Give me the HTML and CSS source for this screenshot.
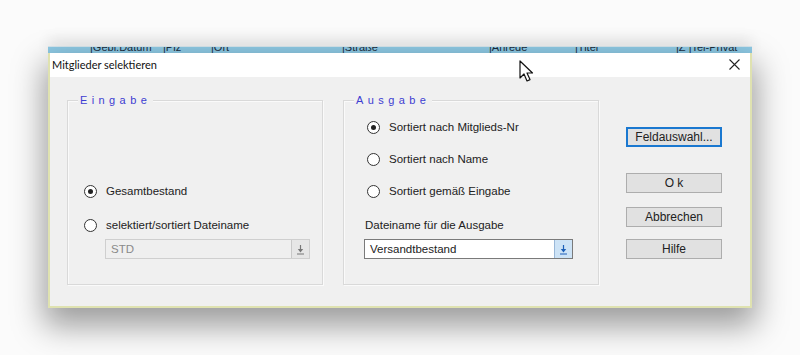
FILE: index.html
```html
<!DOCTYPE html>
<html>
<head>
  <meta charset="utf-8">
  <title>Mitglieder selektieren</title>
  <link rel="stylesheet" href="styles.css">
</head>
<body>
  <div class="scene">
    <div class="backstrip">
      <div class="backstrip-text">
        <span class="col c1">|Gebl.Datum</span>
        <span class="col c2">|Plz</span>
        <span class="col c3">|Ort</span>
        <span class="col c4">|Straße</span>
        <span class="col c5">|Anrede</span>
        <span class="col c6">|Titel</span>
        <span class="col c7">|Z |Tel-Privat</span>
      </div>
    </div>
    <div class="dialog">
      <div class="titlebar">
        <span class="title">Mitglieder selektieren</span>
        <svg class="close" width="11" height="11" viewBox="0 0 11 11">
          <path d="M0.5 0.5 L10.5 10.5 M10.5 0.5 L0.5 10.5" stroke="#222" stroke-width="1.1" fill="none"/>
        </svg>
      </div>
      <div class="body">
        <div class="group group-in">
          <span class="group-title">Eingabe</span>
          <div class="group-bottom">
            <div class="radio-row">
              <span class="radio checked"></span>
              <span>Gesamtbestand</span>
            </div>
            <div class="radio-row row-gap">
              <span class="radio"></span>
              <span>selektiert/sortiert Dateiname</span>
            </div>
            <div class="combo combo-disabled">
              <span class="combo-text">STD</span>
              <span class="combo-btn">
                <svg width="9" height="11" viewBox="0 0 9 11">
                  <path d="M4.5 1 V7" stroke="#777" stroke-width="1.2"/>
                  <path d="M1.8 5 H7.2 L4.5 8.4 Z" fill="#777"/>
                  <path d="M1 10 H8" stroke="#777" stroke-width="1"/>
                </svg>
              </span>
            </div>
          </div>
        </div>

        <div class="group group-out">
          <span class="group-title">Ausgabe</span>
          <div class="out-rows">
            <div class="radio-row">
              <span class="radio checked"></span>
              <span>Sortiert nach Mitglieds-Nr</span>
            </div>
            <div class="radio-row out-gap">
              <span class="radio"></span>
              <span>Sortiert nach Name</span>
            </div>
            <div class="radio-row out-gap">
              <span class="radio"></span>
              <span>Sortiert gemäß Eingabe</span>
            </div>
            <div class="field-label">Dateiname für die Ausgabe</div>
            <div class="combo">
              <span class="combo-text">Versandtbestand</span>
              <span class="combo-btn combo-btn-active">
                <svg width="9" height="11" viewBox="0 0 9 11">
                  <path d="M4.5 1 V7" stroke="#1d5fb8" stroke-width="1.2"/>
                  <path d="M1.8 5 H7.2 L4.5 8.4 Z" fill="#1d5fb8"/>
                  <path d="M1 10 H8" stroke="#1d5fb8" stroke-width="1"/>
                </svg>
              </span>
            </div>
          </div>
        </div>

        <div class="buttons">
          <button class="btn btn-focus">Feldauswahl...</button>
          <button class="btn btn-ok">O k</button>
          <button class="btn btn-cancel">Abbrechen</button>
          <button class="btn btn-help">Hilfe</button>
        </div>
      </div>
    </div>
    <svg class="cursor" width="16" height="24" viewBox="0 0 16 24">
      <path d="M1 1 V18 L5 14 L8 21 L11 19.6 L8 13 H13.5 Z" fill="#fff" stroke="#111" stroke-width="1.2" stroke-linejoin="round"/>
    </svg>
  </div>
</body>
</html>
```

FILE: styles.css
```css
html, body {
  margin: 0;
  padding: 0;
  background: #fbfbfb;
}

body {
  font-family: "Liberation Sans", Arial, sans-serif;
  font-size: 11.5px;
  color: #222;
}

.scene {
  position: relative;
  width: 800px;
  height: 355px;
  overflow: hidden;
  padding-top: 46px;
  box-sizing: border-box;
}

.backstrip {
  margin-left: 48px;
  width: 704px;
  height: 6px;
  overflow: hidden;
  background: #8fcbe6;
  border-top: 1px solid #d9e8ef;
  box-shadow: 0 -6px 14px rgba(0, 0, 0, 0.12);
}

.backstrip-text {
  position: relative;
  height: 6px;
}

.col {
  position: absolute;
  top: -6px;
  font-size: 11px;
  line-height: 12px;
  color: #1a2a3a;
  white-space: nowrap;
}

.c1 { left: 42px; }
.c2 { left: 115px; }
.c3 { left: 163px; }
.c4 { left: 294px; }
.c5 { left: 441px; }
.c6 { left: 527px; }
.c7 { left: 628px; }

.dialog {
  margin-left: 48px;
  width: 704px;
  box-sizing: border-box;
  border: 1px solid #dfe2b0;
  border-width: 0 2px 2px 2px;
  background: #f0f0f0;
  box-shadow: 0 14px 30px 4px rgba(0, 0, 0, 0.38);
}

.titlebar {
  height: 24px;
  background: #fff;
  display: flex;
  align-items: center;
  justify-content: space-between;
  padding: 0 10px 0 2px;
}

.title {
  font-family: Lato, "Noto Sans", sans-serif;
  font-size: 11px;
  color: #111;
  margin-top: -2px;
}

.close {
  margin-top: -1px;
}

.body {
  height: 229px;
  display: flex;
  align-items: flex-start;
  padding-left: 17px;
}

.group {
  width: 256px;
  height: 185px;
  box-sizing: border-box;
  margin-top: 23px;
  border: 1px solid #d9d9d9;
  box-shadow: inset 1px 1px 0 #fafafa, 1px 1px 0 #fafafa;
  display: flex;
  flex-direction: column;
  align-items: flex-start;
}

.group-out {
  margin-left: 20px;
}

.group-title {
  display: inline-block;
  margin: -8px 0 0 10px;
  padding: 0 2px;
  background: #f0f0f0;
  color: #3d3dd2;
  font-size: 11px;
  line-height: 14px;
  letter-spacing: 4.4px;
}

.group-bottom {
  margin-top: auto;
  padding: 0 0 25px 16px;
}

.radio-row {
  display: flex;
  align-items: center;
  height: 16px;
  line-height: 16px;
  white-space: nowrap;
}

.row-gap {
  margin-top: 18px;
}

.radio {
  width: 11px;
  height: 11px;
  border: 1px solid #333;
  border-radius: 50%;
  background: #fff;
  margin-right: 9px;
  position: relative;
  flex: none;
}

.radio.checked::after {
  content: "";
  position: absolute;
  left: 3px;
  top: 3px;
  width: 5px;
  height: 5px;
  border-radius: 50%;
  background: #222;
}

.combo {
  display: flex;
  width: 209px;
  height: 20px;
  margin-top: 6px;
  border: 1px solid #7a7a7a;
  box-sizing: border-box;
  background: #fff;
}

.combo-disabled {
  width: 205px;
  margin-left: 21px;
  border-color: #cfcfcf;
  background: #efefef;
  color: #8a8a8a;
}

.combo-text {
  flex: 1;
  line-height: 18px;
  padding-left: 5px;
}

.combo-btn {
  width: 17px;
  display: flex;
  align-items: center;
  justify-content: center;
  border-left: 1px solid #c8c8c8;
  background: #e6e6e6;
}

.combo-btn-active {
  background: #cde3f6;
  border-left-color: #9ab8d8;
}

.out-rows {
  padding: 12px 0 0 23px;
}

.out-gap {
  margin-top: 16px;
}

.field-label {
  margin: 18px 0 0 -2px;
  line-height: 16px;
}

.out-rows .combo {
  margin-left: -3px;
}

.buttons {
  display: flex;
  flex-direction: column;
  margin-left: 27px;
  padding-top: 50px;
}

.btn {
  width: 96px;
  height: 20px;
  box-sizing: border-box;
  background: #e1e1e1;
  border: 1px solid #adadad;
  font-family: "Liberation Sans", Arial, sans-serif;
  font-size: 12px;
  color: #222;
  padding: 0;
  line-height: 16px;
}

.btn-focus {
  border: 2px solid #1a78d0;
}

.btn-ok {
  margin-top: 26px;
}

.btn-cancel {
  margin-top: 14px;
}

.btn-help {
  margin-top: 12px;
}

.cursor {
  position: absolute;
  left: 519px;
  top: 60px;
}
```
